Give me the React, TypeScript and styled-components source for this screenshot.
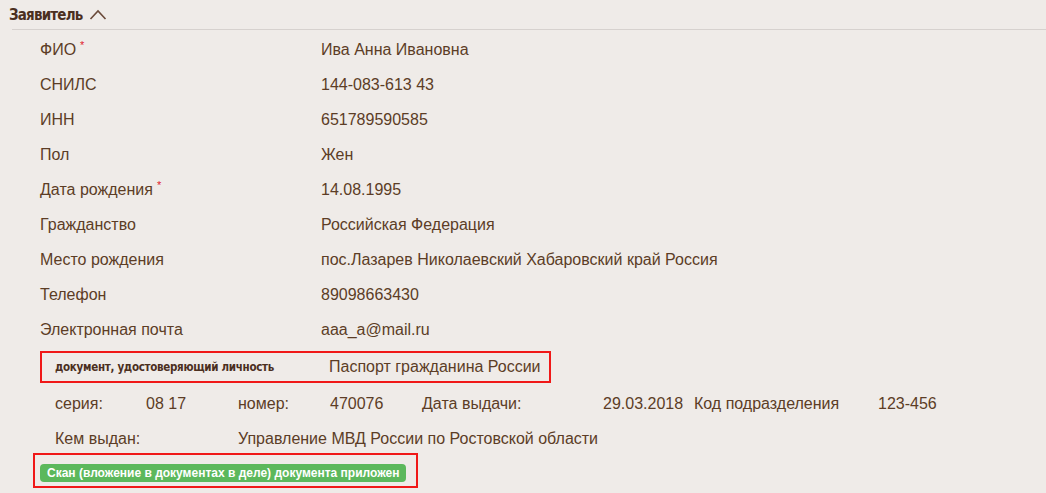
import React from 'react'
import styled, { createGlobalStyle } from 'styled-components'

const GlobalStyle = createGlobalStyle`
  body {
    margin: 0;
    background: #efebe8;
    font-family: "Liberation Sans", Arial, sans-serif;
    color: #5c3d26;
  }
`

const Section = styled.section`
  width: 1046px;
  height: 493px;
  background: #efebe8;
  overflow: hidden;
`

const Header = styled.div`
  display: flex;
  align-items: center;
  gap: 6px;
  height: 29px;
  padding-left: 9px;
`

const HeaderTitle = styled.span`
  font-family: "DejaVu Sans Condensed", "DejaVu Sans", sans-serif;
  font-stretch: condensed;
  font-weight: bold;
  font-size: 15px;
  color: #4b2f1f;
  letter-spacing: -0.8px;
`

const Divider = styled.div`
  margin-left: 12px;
  border-top: 1px solid #d6d1ce;
`

const FieldList = styled.div`
  padding: 2px 0 0 40px;
`

const FieldRow = styled.div`
  display: grid;
  grid-template-columns: 281px 1fr;
  align-items: center;
  height: 35px;
  font-size: 16px;
`

const Required = styled.sup`
  color: #e0192e;
  font-size: 11px;
  margin-left: 4px;
  vertical-align: 6px;
  line-height: 0;
`

const DocBox = styled.div`
  display: grid;
  grid-template-columns: 274px 1fr;
  align-items: center;
  box-sizing: border-box;
  margin: 4px 0 0 40px;
  width: 511px;
  height: 32px;
  padding-left: 13px;
  border: 2px solid #f01818;
`

const DocLabel = styled.span`
  font-family: "DejaVu Sans Condensed", "DejaVu Sans", sans-serif;
  font-stretch: condensed;
  font-weight: bold;
  font-size: 11.5px;
  color: #4b2f1f;
  letter-spacing: -0.3px;
`

const DocValue = styled.span`
  font-size: 16px;
`

const InfoRow = styled.div<{ cols: string; h: number }>`
  display: grid;
  grid-template-columns: ${({ cols }) => cols};
  align-items: center;
  height: ${({ h }) => h}px;
  padding-left: 55px;
  font-size: 16px;
  white-space: nowrap;
`

const ScanBox = styled.div`
  box-sizing: border-box;
  margin-left: 33px;
  width: 385px;
  height: 35px;
  padding: 8px 0 0 5px;
  border: 2px solid #f01818;
`

const Badge = styled.span`
  display: inline-flex;
  align-items: center;
  height: 18px;
  padding: 0 7px;
  border-radius: 4px;
  background: #5cb85c;
  color: #fff;
  font-weight: bold;
  font-size: 12px;
`

const fields: { label: string; value: string; required?: boolean }[] = [
  { label: 'ФИО', value: 'Ива Анна Ивановна', required: true },
  { label: 'СНИЛС', value: '144-083-613 43' },
  { label: 'ИНН', value: '651789590585' },
  { label: 'Пол', value: 'Жен' },
  { label: 'Дата рождения', value: '14.08.1995', required: true },
  { label: 'Гражданство', value: 'Российская Федерация' },
  { label: 'Место рождения', value: 'пос.Лазарев Николаевский Хабаровский край Россия' },
  { label: 'Телефон', value: '89098663430' },
  { label: 'Электронная почта', value: 'aaa_a@mail.ru' },
]

function Chevron() {
  return (
    <svg width="18" height="11" viewBox="0 0 18 11">
      <polyline points="1.5,10 9,2 16.5,10" fill="none" stroke="#6a4a3a" strokeWidth="1.6" />
    </svg>
  )
}

export default function App() {
  return (
    <Section>
      <GlobalStyle />
      <Header>
        <HeaderTitle>Заявитель</HeaderTitle>
        <Chevron />
      </Header>
      <Divider />
      <FieldList>
        {fields.map((f) => (
          <FieldRow key={f.label}>
            <span>
              {f.label}
              {f.required && <Required>*</Required>}
            </span>
            <span>{f.value}</span>
          </FieldRow>
        ))}
      </FieldList>
      <DocBox>
        <DocLabel>документ, удостоверяющий личность</DocLabel>
        <DocValue>Паспорт гражданина России</DocValue>
      </DocBox>
      <InfoRow cols="91px 92px 92px 92px 181px 91px 184px 1fr" h={41}>
        <span>серия:</span>
        <span>08 17</span>
        <span>номер:</span>
        <span>470076</span>
        <span>Дата выдачи:</span>
        <span>29.03.2018</span>
        <span>Код подразделения</span>
        <span>123-456</span>
      </InfoRow>
      <InfoRow cols="183px 1fr" h={29}>
        <span>Кем выдан:</span>
        <span>Управление МВД России по Ростовской области</span>
      </InfoRow>
      <ScanBox>
        <Badge>Скан (вложение в документах в деле) документа приложен</Badge>
      </ScanBox>
    </Section>
  )
}
